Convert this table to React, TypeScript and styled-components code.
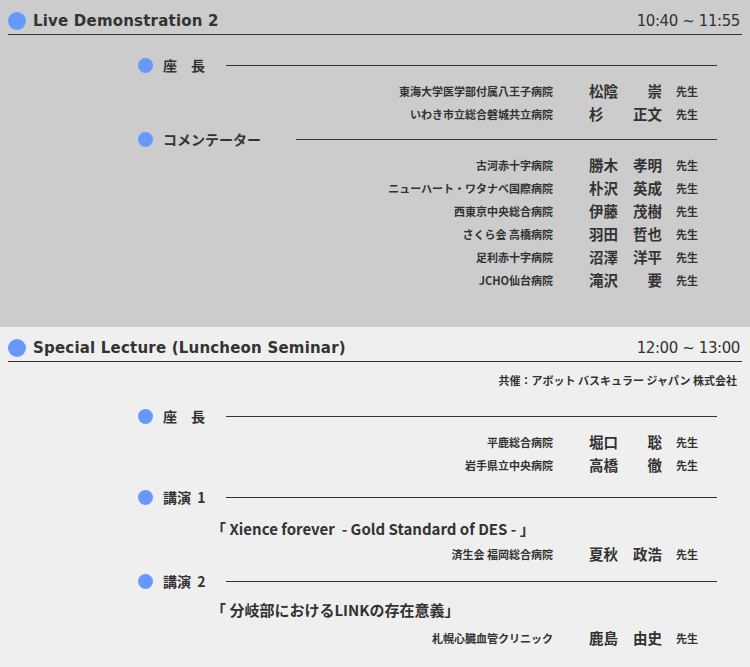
import React from "react";
import styled, { createGlobalStyle } from "styled-components";

const GlobalStyle = createGlobalStyle`
  html, body { margin: 0; padding: 0; background: #efefef; }
  body {
    font-family: "Noto Sans CJK JP", "Noto Sans", sans-serif;
    color: #333;
  }
`;

const Section = styled.section<{ $bg: string; $pb: number }>`
  background: ${(p) => p.$bg};
  padding: 0 8px ${(p) => p.$pb}px;
`;

const Header = styled.header`
  display: flex;
  align-items: center;
  box-sizing: border-box;
  height: 35px;
  padding-top: 8px;
  border-bottom: 1px solid #333;
`;

const Dot = styled.span<{ $size: number }>`
  flex: none;
  width: ${(p) => p.$size}px;
  height: ${(p) => p.$size}px;
  border-radius: 50%;
  background: #6699ff;
`;

const Title = styled.h2`
  flex: 1;
  margin: 0 0 0 7px;
  font-family: "DejaVu Sans", sans-serif;
  font-weight: bold;
  font-size: 15px;
  letter-spacing: 0.2px;
  line-height: 20px;
  color: #333;
`;

const Time = styled.span`
  margin-right: 2px;
  font-family: "DejaVu Sans", sans-serif;
  font-size: 15px;
  letter-spacing: -0.4px;
  line-height: 20px;
  color: #333;
`;

const Sponsor = styled.p`
  margin: 10px 5px 0 0;
  text-align: right;
  font-size: 11px;
  font-weight: bold;
  line-height: 16px;
`;

const SubHeader = styled.div<{ $mt: number }>`
  display: flex;
  align-items: center;
  height: 20px;
  margin-top: ${(p) => p.$mt}px;
  padding: 0 25px 0 130px;
`;

const Label = styled.span`
  margin-left: 10px;
  font-size: 14px;
  font-weight: bold;
  line-height: 20px;
  word-spacing: 3px;
  white-space: pre;
`;

const Rule = styled.span<{ $gap: number }>`
  flex: 1;
  height: 1px;
  margin-left: ${(p) => p.$gap}px;
  background: #333;
`;

const Rows = styled.div`
  padding-top: 4px;
`;

const Row = styled.div<{ $mt?: number }>`
  display: grid;
  grid-template-columns: 1fr 73px 80px;
  align-items: center;
  height: 23px;
  margin-top: ${(p) => p.$mt ?? 0}px;
`;

const Inst = styled.span`
  padding-right: 36px;
  text-align: right;
  font-size: 11px;
  font-weight: bold;
  white-space: pre;
`;

const Name = styled.span`
  display: flex;
  justify-content: space-between;
  font-size: 14.5px;
  font-weight: bold;
`;

const Sensei = styled.span`
  padding-left: 14px;
  font-size: 11px;
  font-weight: bold;
`;

const LectureTitle = styled.p<{ $mt: number }>`
  margin: ${(p) => p.$mt}px 0 0 203px;
  font-size: 15px;
  font-weight: bold;
  line-height: 22px;
  white-space: pre;
`;

type PersonData = [string, string, string];

const Person = ({ p, mt }: { p: PersonData; mt?: number }) => (
  <Row $mt={mt}>
    <Inst>{p[0]}</Inst>
    <Name>
      <span>{p[1]}</span>
      <span>{p[2]}</span>
    </Name>
    <Sensei>先生</Sensei>
  </Row>
);

const Sub = ({ label, gap, mt }: { label: string; gap: number; mt: number }) => (
  <SubHeader $mt={mt}>
    <Dot $size={15} />
    <Label>{label}</Label>
    <Rule $gap={gap} />
  </SubHeader>
);

const chairs1: PersonData[] = [
  ["東海大学医学部付属八王子病院", "松陰", "崇"],
  ["いわき市立総合磐城共立病院", "杉", "正文"],
];

const commentators: PersonData[] = [
  ["古河赤十字病院", "勝木", "孝明"],
  ["ニューハート・ワタナベ国際病院", "朴沢", "英成"],
  ["西東京中央総合病院", "伊藤", "茂樹"],
  ["さくら会 高橋病院", "羽田", "哲也"],
  ["足利赤十字病院", "沼澤", "洋平"],
  ["JCHO仙台病院", "滝沢", "要"],
];

const chairs2: PersonData[] = [
  ["平鹿総合病院", "堀口", "聡"],
  ["岩手県立中央病院", "高橋", "徹"],
];

export default function App() {
  return (
    <>
      <GlobalStyle />
      <Section $bg="#cccccc" $pb={36}>
        <Header>
          <Dot $size={18} />
          <Title>Live Demonstration 2</Title>
          <Time>10:40 ~ 11:55</Time>
        </Header>
        <Sub label="座　長" gap={21} mt={20} />
        <Rows>
          {chairs1.map((p) => (
            <Person key={p[0]} p={p} />
          ))}
        </Rows>
        <Sub label="コメンテーター" gap={35} mt={4} />
        <Rows>
          {commentators.map((p) => (
            <Person key={p[0]} p={p} />
          ))}
        </Rows>
      </Section>
      <Section $bg="#efefef" $pb={40}>
        <Header>
          <Dot $size={18} />
          <Title>Special Lecture (Luncheon Seminar)</Title>
          <Time>12:00 ~ 13:00</Time>
        </Header>
        <Sponsor>共催：アボット バスキュラー ジャパン 株式会社</Sponsor>
        <Sub label="座　長" gap={21} mt={18} />
        <Rows>
          {chairs2.map((p) => (
            <Person key={p[0]} p={p} />
          ))}
        </Rows>
        <Sub label="講演 1" gap={21} mt={11} />
        <LectureTitle $mt={11}>「 Xience forever  - Gold Standard of DES - 」</LectureTitle>
        <Person p={["済生会 福岡総合病院", "夏秋", "政浩"]} mt={2} />
        <Sub label="講演 2" gap={21} mt={6} />
        <LectureTitle $mt={8}>「 分岐部におけるLINKの存在意義」</LectureTitle>
        <Person p={["札幌心臓血管クリニック", "鹿島", "由史"]} mt={5} />
      </Section>
    </>
  );
}
